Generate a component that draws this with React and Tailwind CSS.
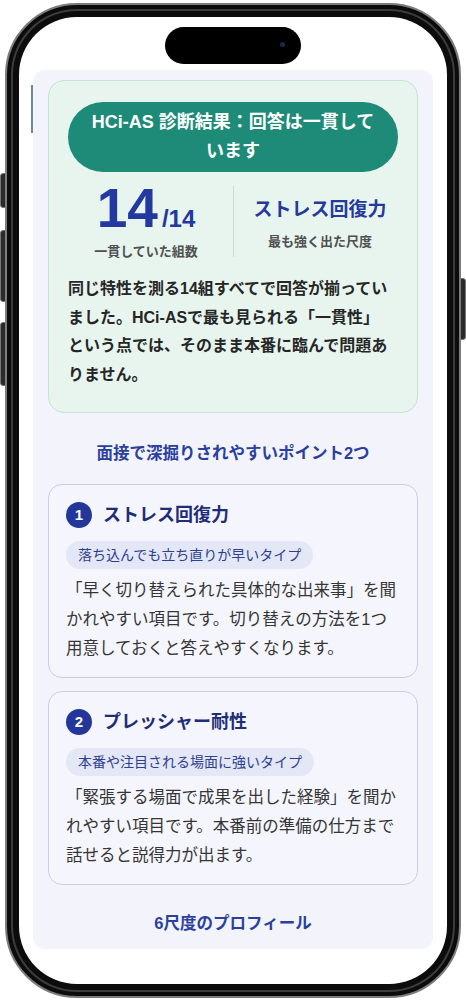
export default function App() {
  const font = "font-['Liberation_Sans','Noto_Sans_CJK_JP',sans-serif]";
  return (
    <div className={`relative w-[466px] h-[1000px] bg-white overflow-hidden ${font}`}>
      {/* side buttons */}
      <div className="absolute left-0 top-[173px] w-[6px] h-[35px] rounded-l-[3px] bg-[#2b2b2b] border border-[#777]" />
      <div className="absolute left-0 top-[230px] w-[6px] h-[72px] rounded-l-[3px] bg-[#2b2b2b] border border-[#777]" />
      <div className="absolute left-0 top-[322px] w-[6px] h-[64px] rounded-l-[3px] bg-[#2b2b2b] border border-[#777]" />
      <div className="absolute right-0 top-[278px] w-[6px] h-[62px] rounded-r-[3px] bg-[#2b2b2b] border border-[#777]" />

      {/* phone frame */}
      <div className="relative ml-[5px] mt-[3px] w-[456px] h-[995px] rounded-[72px] bg-[#0c0c0c] border-[2px] border-[#7d7d7d] p-[12px] shadow-[inset_0_0_0_4px_#0c0c0c,inset_0_0_0_6px_#3c3c3c]">
        <div className="relative w-full h-full rounded-[58px] bg-white overflow-hidden pt-[53px] px-[14px]">
          {/* dynamic island */}
          <div className="absolute top-[10px] left-[146px] w-[136px] h-[37px] rounded-full bg-black">
            <div className="absolute right-[16px] top-[15px] w-[5px] h-[5px] rounded-full bg-[#1b2a4a]" />
          </div>

          {/* content panel */}
          <div className="relative rounded-[12px] bg-[#f2f3fb] px-[15px] pt-[10px] pb-[14px]">
            <div className="absolute left-[-2px] top-[15px] w-[2px] h-[48px] bg-[#6f8b8f]" />

            {/* result card */}
            <div className="rounded-[16px] bg-[#e7f5ee] border border-[#c4e4d1] px-[19px] pt-[21px] pb-[23px]">
              <div className="rounded-full bg-[#1e8a78] py-[6px] text-center text-white font-bold text-[18px] leading-[29px]">
                HCi-AS 診断結果：回答は一貫して<br />います
              </div>

              <div className="flex mt-[9px]">
                <div className="w-[156px] flex flex-col items-center">
                  <div className="flex items-baseline text-[#2339a0] font-bold">
                    <span className="text-[55px] leading-[54px]">14</span>
                    <span className="text-[24px] leading-none ml-[4px]">/14</span>
                  </div>
                  <div className="mt-[8px] text-[13px] leading-[18px] font-bold text-[#505050]">一貫していた組数</div>
                </div>
                <div className="ml-[9px] self-center w-px h-[71px] bg-[#cfdcd5]" />
                <div className="flex-1 pl-[8px] pt-[6px] flex flex-col items-center justify-center">
                  <div className="text-[19px] leading-[26px] font-bold text-[#27399b]">ストレス回復力</div>
                  <div className="mt-[10px] text-[13px] leading-[18px] font-bold text-[#505050]">最も強く出た尺度</div>
                </div>
              </div>

              <p className="mt-[14px] text-[16px] leading-[28.5px] font-bold text-[#262626] whitespace-nowrap">
                同じ特性を測る14組すべてで回答が揃ってい<br />
                ました。HCi-ASで最も見られる「一貫性」<br />
                という点では、そのまま本番に臨んで問題あ<br />
                りません。
              </p>
            </div>

            <h2 className="mt-[28px] text-center text-[16.5px] leading-[24px] font-bold text-[#2b3f9e]">
              面接で深掘りされやすいポイント2つ
            </h2>

            <PointCard
              className="mt-[19px]"
              n="1"
              title="ストレス回復力"
              tag="落ち込んでも立ち直りが早いタイプ"
              lines={[
                "「早く切り替えられた具体的な出来事」を聞",
                "かれやすい項目です。切り替えの方法を1つ",
                "用意しておくと答えやすくなります。",
              ]}
            />
            <PointCard
              className="mt-[13px]"
              n="2"
              title="プレッシャー耐性"
              tag="本番や注目される場面に強いタイプ"
              lines={[
                "「緊張する場面で成果を出した経験」を聞か",
                "れやすい項目です。本番前の準備の仕方まで",
                "話せると説得力が出ます。",
              ]}
            />

            <h2 className="mt-[26px] text-center text-[16.5px] leading-[24px] font-bold text-[#2b3f9e]">
              6尺度のプロフィール
            </h2>
          </div>
        </div>
      </div>
    </div>
  );
}

function PointCard({ className, n, title, tag, lines }) {
  return (
    <div className={`rounded-[14px] bg-[#f5f6fd] border border-[#c8cce8] px-[17px] pt-[17px] pb-[14px] ${className}`}>
      <div className="flex items-center h-[26px]">
        <div className="w-[26px] h-[26px] rounded-full bg-[#23379b] text-white text-[15px] font-bold flex items-center justify-center">
          {n}
        </div>
        <div className="ml-[11px] text-[18px] leading-[26px] font-bold text-[#1f2d78]">{title}</div>
      </div>
      <div className="mt-[13px] inline-flex h-[28px] items-center rounded-full bg-[#e4e7f6] px-[12px] text-[14px] text-[#2e4190] font-normal">
        {tag}
      </div>
      <p className="mt-[7px] text-[16.5px] leading-[29px] text-[#353535] whitespace-nowrap">
        {lines.map((l, i) => (
          <span key={i}>
            {l}
            {i < lines.length - 1 && <br />}
          </span>
        ))}
      </p>
    </div>
  );
}
